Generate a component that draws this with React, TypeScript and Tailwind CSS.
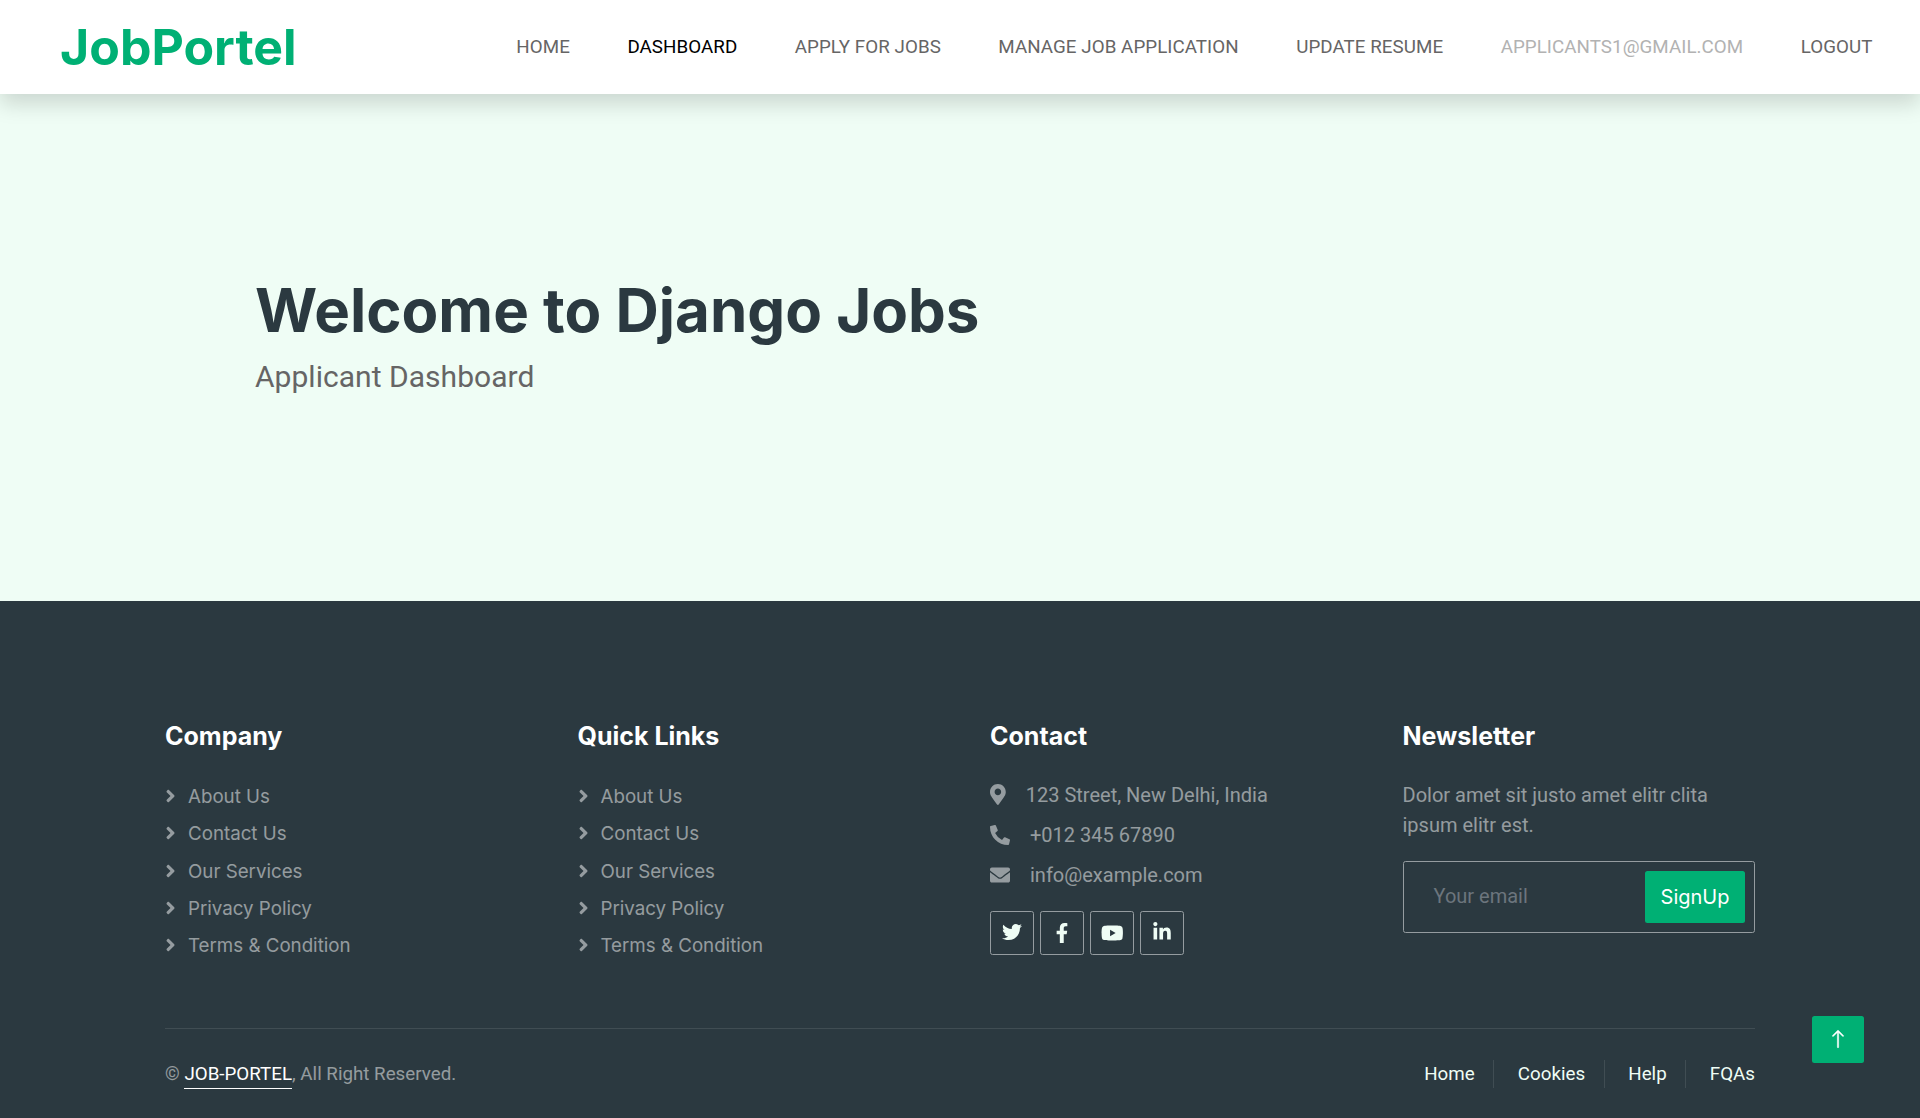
import { FaAngleRight, FaEnvelope, FaFacebookF, FaLinkedinIn, FaMapMarkerAlt, FaPhoneAlt, FaTwitter, FaYoutube } from "react-icons/fa";
import { BsArrowUp } from "react-icons/bs";

const navItems = [
  { label: "Home", color: "text-[#666565]" },
  { label: "Dashboard", color: "text-black" },
  { label: "Apply for jobs", color: "text-[#666565]" },
  { label: "Manage Job Application", color: "text-[#666565]" },
  { label: "Update Resume", color: "text-[#666565]" },
  { label: "applicants1@gmail.com", color: "text-[#b2b2b2]" },
  { label: "Logout", color: "text-[#666565]" },
];

const links = ["About Us", "Contact Us", "Our Services", "Privacy Policy", "Terms & Condition"];

const socials = [
  { Icon: FaTwitter, size: "mb-[2px] size-5" },
  { Icon: FaFacebookF, size: "mb-[1px] size-5" },
  { Icon: FaYoutube, size: "mb-[1px] h-5 w-[22.5px]" },
  { Icon: FaLinkedinIn, size: "mb-[2px] size-5" },
];

function Heading({ children }: { children: string }) {
  return <h5 className="mb-[30px] font-['Inter',sans-serif] text-[25px] leading-[30px] font-bold text-white">{children}</h5>;
}

function LinkColumn({ title }: { title: string }) {
  return (
    <div>
      <Heading>{title}</Heading>
      <div className="flex flex-col gap-[9.3px] pt-[2px]">
        {links.map((l) => (
          <a key={l} href="#" className="flex h-[28px] items-center font-['Inter',sans-serif] text-[18.75px] leading-[28px] tracking-[-0.02px]">
            <FaAngleRight className="mr-[12px] mb-[2px] h-[20px] w-[11px]" />
            {l}
          </a>
        ))}
      </div>
    </div>
  );
}

export default function App() {
  return (
    <div className="flex h-[1118px] flex-col overflow-hidden bg-[#effdf5] font-['Roboto',sans-serif] text-[20px] leading-[30px]">
      <header className="z-10 flex h-[94px] shrink-0 items-center justify-between bg-white pr-[47.5px] pl-[60px] shadow-[0_10px_20px_rgba(0,0,0,0.15)]">
        <h1 className="font-['Inter',sans-serif] text-[50px] leading-[60px] font-bold text-[#00b074]">JobPortel</h1>
        <nav className="flex gap-[57.5px] text-[18.75px] leading-[28px] tracking-[0.06px] uppercase">
          {navItems.map((n) => (
            <a key={n.label} href="#" className={n.color}>{n.label}</a>
          ))}
        </nav>
      </header>

      <main className="h-[507px] shrink-0 px-[255px] pt-[180px]">
        <h1 className="font-['Inter',sans-serif] text-[60px] leading-[72px] font-bold text-[#2b3940]">Welcome to Django Jobs</h1>
        <p className="mt-[8px] text-[30px] leading-[45px] tracking-[0.03px] text-[#666565]">Applicant Dashboard</p>
      </main>

      <footer className="flex grow flex-col bg-[#2b3940] px-[165px] pt-[120px] text-white/50">
        <div className="grid h-[307px] grid-cols-4 gap-[60px]">
          <LinkColumn title="Company" />
          <LinkColumn title="Quick Links" />
          <div>
            <Heading>Contact</Heading>
            <div className="-mt-[1px] flex flex-col gap-[10px]">
              <p className="flex items-center"><FaMapMarkerAlt className="mr-5 mb-[1px] h-[21px] w-[15.75px]" />123 Street, New Delhi, India</p>
              <p className="flex items-center"><FaPhoneAlt className="mr-5 mb-[1px] size-5" />+012 345 67890</p>
              <p className="flex items-center"><FaEnvelope className="mr-5 mb-[1px] size-5" />info@example.com</p>
            </div>
            <div className="mt-[21px] flex gap-[6px] text-[#effdf5]">
              {socials.map(({ Icon, size }, i) => (
                <a key={i} href="#" className="flex size-11 items-center justify-center rounded-[2.5px] border border-[#959ca0]">
                  <Icon className={size} />
                </a>
              ))}
            </div>
          </div>
          <div>
            <Heading>Newsletter</Heading>
            <p className="-mt-[1px]">Dolor amet sit justo amet elitr clita ipsum elitr est.</p>
            <div className="mt-[21px] flex h-[72px] items-center justify-between rounded-[2.5px] border border-[#959ca0] pr-[9px] pl-[30px]">
              <span className="mb-[2px] text-[#6c757d]">Your email</span>
              <button className="h-[52px] w-[100px] rounded-[2.5px] bg-[#00b074] font-['Inter',sans-serif] text-white">SignUp</button>
            </div>
          </div>
        </div>
        <div className="flex items-start justify-between border-t border-white/10 pt-[31px] text-[18.75px] leading-[28px]">
          <p>
            © <a href="#" className="border-b border-white pb-[3px] text-white">JOB-PORTEL</a>, All Right Reserved.
          </p>
          <div className="flex text-[#effdf5]">
            <a href="#" className="mr-[23.4px] border-r border-white/10 pr-[18.75px]">Home</a>
            <a href="#" className="mr-[23.4px] border-r border-white/10 pr-[18.75px]">Cookies</a>
            <a href="#" className="mr-[23.4px] border-r border-white/10 pr-[18.75px]">Help</a>
            <a href="#">FQAs</a>
          </div>
        </div>
      </footer>

      <a href="#" className="fixed top-[1016px] left-[1812px] flex h-[47px] w-[52px] items-center justify-center rounded-[2.5px] bg-[#00b074] text-white">
        <BsArrowUp className="mb-[2px] size-5 stroke-[0.4]" />
      </a>
    </div>
  );
}
